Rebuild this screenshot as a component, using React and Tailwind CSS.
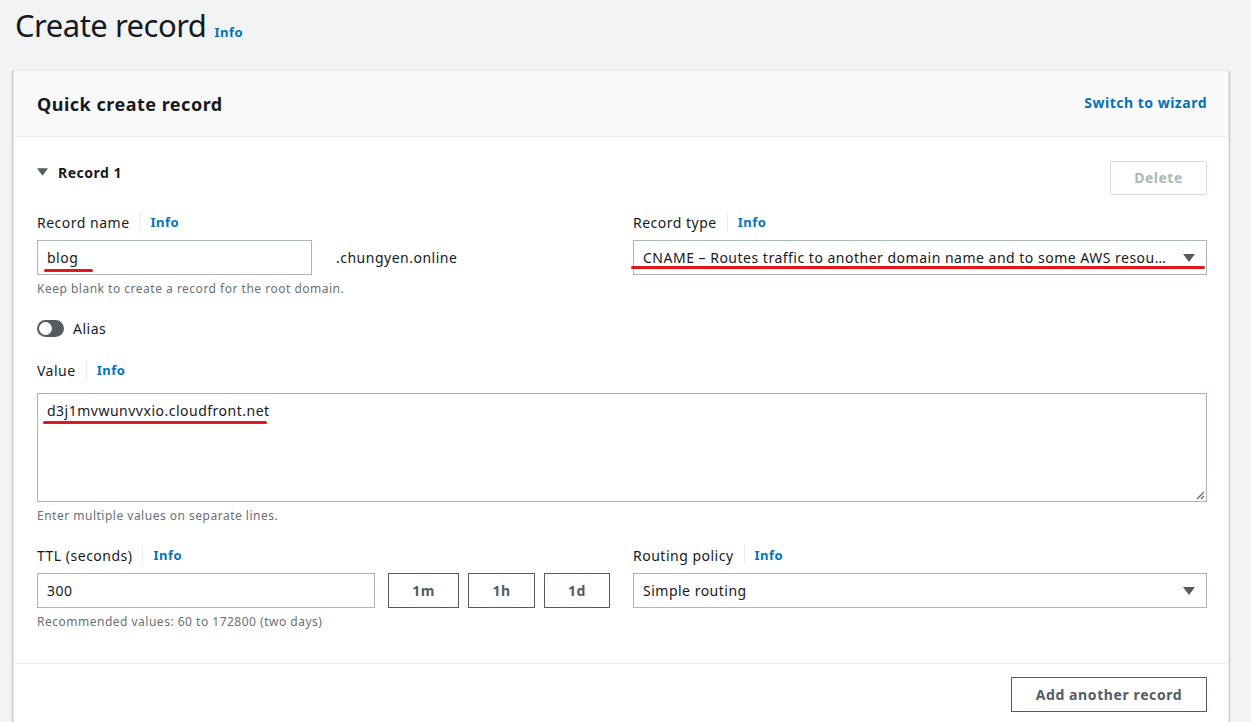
import React from 'react';

// ─── Small pieces ────────────────────────────────────────────────────────────
function Caret({ className = '' }) {
  return (
    <svg width="12" height="8" viewBox="0 0 12 8" className={className}>
      <path d="M0 0 L12 0 L6 8 Z" fill="#545b64" />
    </svg>
  );
}

function Label({ children }) {
  return (
    <div className="flex items-center h-[22px] text-[14px] text-[#16191f]">
      <span>{children}</span>
      <span className="mx-[10px] h-[20px] w-px bg-[#eaeded]" />
      <span className="text-[13px] font-bold text-[#0073bb] mt-[2px]">Info</span>
    </div>
  );
}

function Hint({ children }) {
  return <div className="mt-[6px] text-[12px] leading-[16px] text-[#687078]">{children}</div>;
}

// red hand-drawn underline marks from the screenshot
function Mark({ className }) {
  return <span className={`absolute h-[3px] rounded-full bg-[#e3161b] ${className}`} />;
}

function Select({ children, marked }) {
  return (
    <div className="relative mt-[7px] flex h-[35px] items-center border border-[#aab7b8] bg-white pl-[9px] pr-[11px] text-[14px] text-[#16191f]">
      <span className="min-w-0 flex-1 truncate pr-3">{children}</span>
      <Caret />
      {marked && <Mark className="left-[-3px] right-[1px] top-[25px]" />}
    </div>
  );
}

function OutlineButton({ children, className = '' }) {
  return (
    <button className={`flex h-[35px] items-center justify-center border border-[#545b64] bg-white text-[14px] font-bold text-[#545b64] ${className}`}>
      {children}
    </button>
  );
}

// ─── Page ────────────────────────────────────────────────────────────────────
export default function App() {
  return (
    <div
      className="min-h-screen bg-[#f2f3f3] pl-[13px] pr-[22px] tracking-[0.5px]"
      style={{ fontFamily: '"Noto Sans", "Open Sans", Arial, sans-serif' }}
    >
      {/* Title */}
      <div className="flex items-baseline pl-[2px] pt-[3px] h-[70px]">
        <h1 className="text-[31px] leading-[44px] text-[#16191f] tracking-[-0.5px]">Create record</h1>
        <span className="ml-[8px] text-[13px] font-bold text-[#0073bb]">Info</span>
      </div>

      {/* Card */}
      <div className="border border-[#eaeded] bg-white shadow-[0_1px_1px_0_rgba(0,28,36,0.3),1px_1px_1px_0_rgba(0,28,36,0.15),-1px_1px_1px_0_rgba(0,28,36,0.15)]">
        <div className="flex h-[66px] items-center justify-between border-b border-[#eaeded] bg-[#fafafa] pl-[23px] pr-[21px] pt-[2px]">
          <h2 className="text-[18px] font-bold text-[#16191f]">Quick create record</h2>
          <span className="text-[14px] font-bold text-[#0073bb] -mt-[4px]">Switch to wizard</span>
        </div>

        <div className="pl-[23px] pr-[21px] pt-[24px] pb-[33px]">
          {/* Record header */}
          <div className="flex h-[34px] items-center justify-between">
            <div className="flex items-center gap-[10px] text-[14px] font-bold text-[#16191f] -mt-[12px]">
              <Caret className="w-[11px]" />
              <span>Record 1</span>
            </div>
            <button className="h-[34px] w-[97px] rounded-[2px] border border-[#d5dbdb] bg-white pb-[2px] text-[14px] font-bold text-[#aab7b8]">
              Delete
            </button>
          </div>

          {/* Name + type */}
          <div className="mt-[16px] grid grid-cols-2 gap-x-[22px]">
            <div>
              <Label>Record name</Label>
              <div className="mt-[7px] flex items-center">
                <div className="relative flex h-[35px] w-[275px] items-center border border-[#aab7b8] bg-white pl-[9px] text-[14px] text-[#16191f]">
                  blog
                  <Mark className="left-[6px] w-[49px] top-[28px]" />
                </div>
                <span className="ml-[24px] text-[14px] text-[#16191f]">.chungyen.online</span>
              </div>
              <Hint>Keep blank to create a record for the root domain.</Hint>
            </div>
            <div>
              <Label>Record type</Label>
              <Select marked>CNAME – Routes traffic to another domain name and to some AWS resources</Select>
            </div>
          </div>

          {/* Alias */}
          <div className="mt-[21px] flex items-center gap-[9px] text-[14px] text-[#16191f]">
            <span className="flex h-[17px] w-[27px] items-center rounded-full bg-[#545b64] px-[2px]">
              <span className="h-[13px] w-[13px] rounded-full bg-white" />
            </span>
            Alias
          </div>

          {/* Value */}
          <div className="mt-[20px]">
            <Label>Value</Label>
            <div className="relative mt-[12px] h-[109px] border border-[#aab7b8] bg-white px-[9px] pt-[6px] text-[14px] text-[#16191f]">
              d3j1mvwunvvxio.cloudfront.net
              <Mark className="left-[5px] w-[224px] top-[27px]" />
              <svg width="10" height="10" viewBox="0 0 10 10" className="absolute bottom-[1px] right-[1px]">
                <path d="M9 2 L2 9 M9 6 L6 9" stroke="#687078" strokeWidth="1.4" />
              </svg>
            </div>
            <Hint>Enter multiple values on separate lines.</Hint>
          </div>

          {/* TTL + routing */}
          <div className="mt-[20px] grid grid-cols-2 gap-x-[22px]">
            <div>
              <Label>TTL (seconds)</Label>
              <div className="mt-[7px] flex items-center">
                <div className="flex h-[35px] w-[338px] items-center border border-[#aab7b8] bg-white pl-[9px] text-[14px] text-[#16191f]">
                  300
                </div>
                <OutlineButton className="ml-[13px] w-[71px]">1m</OutlineButton>
                <OutlineButton className="ml-[9px] w-[67px]">1h</OutlineButton>
                <OutlineButton className="ml-[9px] w-[66px]">1d</OutlineButton>
              </div>
              <Hint>Recommended values: 60 to 172800 (two days)</Hint>
            </div>
            <div>
              <Label>Routing policy</Label>
              <Select>Simple routing</Select>
            </div>
          </div>
        </div>

        {/* Footer */}
        <div className="flex justify-end border-t border-[#eaeded] pl-[23px] pr-[21px] pt-[13px] pb-[20px]">
          <OutlineButton className="w-[196px] tracking-[0.6px]">Add another record</OutlineButton>
        </div>
      </div>
    </div>
  );
}
